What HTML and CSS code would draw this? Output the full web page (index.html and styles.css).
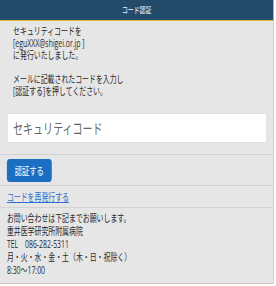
FILE: index.html
```html
<!DOCTYPE html>
<html lang="ja">
<head>
    <meta charset="UTF-8">
    <title>コード認証</title>
    <link rel="stylesheet" href="styles.css">
</head>
<body>
    <div class="frame">
        <div class="panel">
            <div class="panel-header">コード認証</div>

            <div class="panel-body">
                <p class="message">
                    セキュリティコードを<br>
                    [eguXXX@shigei.or.jp ]<br>
                    に発行いたしました。<br>
                    <br>
                    メールに記載されたコードを入力し<br>
                    [認証する]を押してください。
                </p>
                <input class="code-input" type="text" placeholder="セキュリティコード">
            </div>

            <div class="actions">
                <button class="btn-auth">認証する</button>
            </div>

            <div class="resend">
                <a href="#">コードを再発行する</a>
            </div>

            <div class="contact">
                <p>お問い合わせは下記までお願いします。</p>
                <p>重井医学研究所附属病院</p>
                <p>TEL　086-282-5311</p>
                <p>月・火・水・金・土（木・日・祝除く）</p>
                <p>8:30～17:00</p>
            </div>
        </div>
    </div>
</body>
</html>
```
FILE: styles.css
```css
body {
    margin: 0;
    font-family: "Open Sans", "Noto Sans CJK JP", sans-serif;
    color: #2a2a2a;
    background-color: #ffffff;
}

.frame {
    width: 276px;
    height: 286px;
    overflow: hidden;
}

/* the capture is squeezed sideways, so the panel is laid out wide and narrowed */
.panel {
    width: 396px;
    height: 283px;
    background-color: #e6e6e6;
    border-right: 1px solid #c8c8c8;
    border-bottom: 1px solid #c8c8c8;
    transform: scaleX(0.69);
    transform-origin: 0 0;
}

.panel-header {
    height: 20px;
    line-height: 20px;
    background-color: #234b6c;
    border-bottom: 1px solid #e3b63c;
    color: #ffffff;
    font-size: 8.5px;
    text-align: center;
}

.panel-body {
    padding: 4px 10px 11px 10px;
    border-bottom: 1px solid #d2d2d2;
}

.message {
    margin: 0 0 16px 9px;
    font-size: 10px;
    line-height: 12px;
}

.code-input {
    display: block;
    box-sizing: border-box;
    width: 377px;
    height: 30px;
    padding: 0 8px;
    border: 1px solid #dcdcdc;
    border-radius: 3px;
    background-color: #ffffff;
    font-family: inherit;
    font-size: 14.5px;
    color: #333;
}

.code-input::placeholder {
    color: #666;
}

.actions {
    padding: 4px 10px 3px 10px;
    border-bottom: 1px solid #d2d2d2;
}

.btn-auth {
    display: block;
    width: 65px;
    height: 23px;
    padding: 0;
    border: none;
    border-radius: 4px;
    background-color: #1b6ec2;
    color: #ffffff;
    font-family: inherit;
    font-size: 10.5px;
}

.resend {
    padding: 5px 10px 4px 10px;
    border-bottom: 1px solid #d2d2d2;
    font-size: 10px;
    line-height: 12px;
}

.resend a {
    color: #2c6fcc;
}

.contact {
    padding: 4px 10px;
    font-size: 10px;
    line-height: 13px;
}

.contact p {
    margin: 0;
}
```
